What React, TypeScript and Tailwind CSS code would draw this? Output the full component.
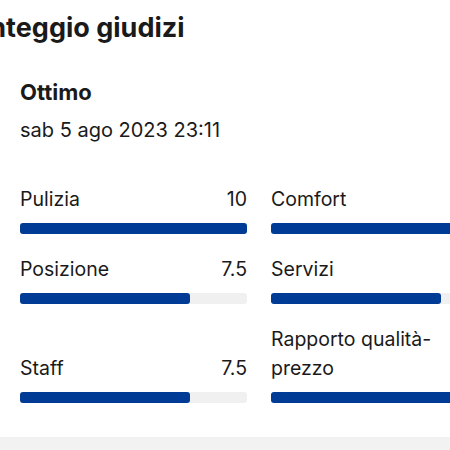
const SCORES = [
  { left: { label: 'Pulizia', value: '10', pct: 100 }, right: { label: 'Comfort', pct: 100 } },
  { left: { label: 'Posizione', value: '7.5', pct: 75 }, right: { label: 'Servizi', pct: 75 } },
  { left: { label: 'Staff', value: '7.5', pct: 75 }, right: { label: 'Rapporto qualità-prezzo', pct: 100 } },
]

function ScoreCell({ label, value, pct }: { label: string; value?: string; pct: number }) {
  return (
    <div className="flex flex-col justify-end">
      <div className="flex items-end justify-between gap-3 text-[19.5px] leading-[29px] text-[#1a1a1a]">
        <span className="max-w-[170px]">{label}</span>
        {value && <span>{value}</span>}
      </div>
      <div className="mt-[9px] h-[11px] w-full rounded-[3px] bg-[#f0f0f0]">
        <div className="h-full rounded-[3px] bg-[#003b95]" style={{ width: `${pct}%` }} />
      </div>
    </div>
  )
}

export default function App() {
  return (
    <div className="flex h-[450px] w-[450px] flex-col overflow-hidden bg-white font-['Inter','Noto_Sans',sans-serif] text-[#1a1a1a]">
      {/* Header */}
      <div className="pt-3">
        <h1 className="ml-[-45px] whitespace-nowrap text-[27px] font-bold leading-[32px]">
          Punteggio giudizi
        </h1>
      </div>

      {/* Review */}
      <div className="pl-5">
        <div className="mt-[34px] text-[22px] font-bold leading-[28px]">Ottimo</div>
        <div className="mt-[10px] text-[20px] leading-[28px]">sab 5 ago 2023 23:11</div>

        <div className="mt-[41px] grid w-[478px] grid-cols-[227px_227px] gap-x-6 gap-y-[21px]">
          {SCORES.map((row) => (
            <>
              <ScoreCell key={row.left.label} {...row.left} />
              <ScoreCell key={row.right.label} {...row.right} />
            </>
          ))}
        </div>
      </div>

      <div className="mt-[34px] flex-1 bg-[#f2f2f2]" />
    </div>
  )
}
